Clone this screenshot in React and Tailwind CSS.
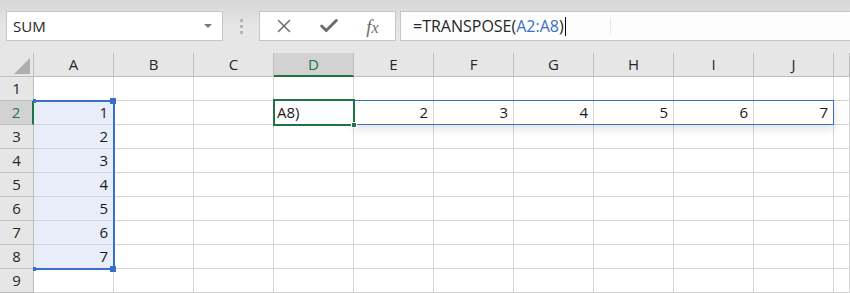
import { X, Check } from 'lucide-react';

const COLS = ['A', 'B', 'C', 'D', 'E', 'F', 'G', 'H', 'I', 'J', ''];
const ROWS = [1, 2, 3, 4, 5, 6, 7, 8, 9];

const cellValue = (row, col) => {
  if (!col) return '';
  if (col === 'A' && row >= 2 && row <= 8) return String(row - 1);
  if (row === 2) {
    const idx = 'EFGHIJ'.indexOf(col);
    if (idx >= 0) return String(idx + 2);
  }
  return '';
};

function TopBar() {
  return (
    <div className="h-[53px] flex items-start pt-[11px] bg-gradient-to-b from-[#d6d6d6] via-[#e6e6e6] to-[#e6e6e6]">
      {/* name box */}
      <div className="ml-[6px] w-[217px] h-[30px] bg-white border border-[#c6c6c6] flex items-center justify-between pl-[6px] pr-[10px]">
        <span className="text-[15px] text-[#262626]">SUM</span>
        <div className="w-0 h-0 border-l-[4px] border-r-[4px] border-t-[4px] border-l-transparent border-r-transparent border-t-[#7a7a7a]" />
      </div>
      {/* grip dots */}
      <div className="ml-[17px] mt-[8px] flex flex-col gap-[3px]">
        <div className="w-[3px] h-[3px] bg-[#b4b4b4]" />
        <div className="w-[3px] h-[3px] bg-[#b4b4b4]" />
        <div className="w-[3px] h-[3px] bg-[#b4b4b4]" />
      </div>
      {/* buttons */}
      <div className="ml-[16px] w-[137px] h-[30px] bg-white border border-[#c6c6c6] flex items-center">
        <div className="w-[45px] flex justify-center pl-[2px]">
          <X size={22} strokeWidth={1.6} color="#6b6b6b" />
        </div>
        <div className="w-[45px] flex justify-center pl-[2px]">
          <Check size={22} strokeWidth={3.2} color="#6b6b6b" />
        </div>
        <div className="w-[45px] flex justify-center">
          <span className="text-[19px] italic text-[#6b6b6b] leading-none" style={{ fontFamily: '"Liberation Serif", serif' }}>
            f<span className="text-[16px]">x</span>
          </span>
        </div>
      </div>
      {/* formula bar */}
      <div className="ml-[4px] flex-1 h-[30px] bg-[#fdfdfd] border-y border-l border-[#c6c6c6] flex items-center pl-[12px] relative">
        <span className="text-[16px] text-[#262626]">
          =TRANSPOSE(<span className="text-[#3a6fc4]">A2:A8</span>)
        </span>
        <div className="w-[1px] h-[19px] bg-black ml-[1px]" />
        <div className="absolute left-[209px] top-[6px] w-[1px] h-[16px] bg-[#e8e8e8]" />
      </div>
    </div>
  );
}

export default function App() {
  return (
    <div className="w-[850px] h-[293px] overflow-hidden bg-white" style={{ fontFamily: '"Open Sans", "Noto Sans", sans-serif' }}>
      <TopBar />
      <div className="relative">
        <div className="grid grid-cols-[34px_repeat(10,80px)_1fr] grid-rows-[24px_repeat(9,24px)]">
          {/* header row */}
          <div className="bg-[#e6e6e6] border-r border-b border-[#bdbdbd]" />
          {COLS.map((c, i) =>
            c === 'D' ? (
              <div key={i} className="bg-[#d2d2d2] border-r border-[#bdbdbd] border-b-2 border-b-[#217346] flex items-center justify-center text-[15px] text-[#217346]">
                {c}
              </div>
            ) : (
              <div key={i} className="bg-[#e6e6e6] border-r border-b border-[#bdbdbd] flex items-center justify-center text-[15px] text-[#262626]">
                {c}
              </div>
            )
          )}
          {ROWS.map((r) => [
            r === 2 ? (
              <div key={`h${r}`} className="bg-[#d2d2d2] border-b border-[#bdbdbd] border-r-2 border-r-[#217346] flex items-center justify-center text-[15px] text-[#217346]">
                {r}
              </div>
            ) : (
              <div key={`h${r}`} className="bg-[#e6e6e6] border-r border-b border-[#bdbdbd] flex items-center justify-center text-[15px] text-[#262626]">
                {r}
              </div>
            ),
            ...COLS.map((c, i) => {
              const inA = c === 'A' && r >= 2 && r <= 8;
              const v = cellValue(r, c);
              return (
                <div
                  key={`${r}-${i}`}
                  className={`border-r border-b border-[#d4d4d4] flex items-center justify-end pr-[5px] text-[15px] text-[#1a1a1a] ${inA ? 'bg-[#e7eef9]' : ''}`}
                >
                  {v}
                </div>
              );
            }),
          ])}
        </div>

        {/* select-all corner triangle */}
        <svg className="absolute left-[14px] top-[5px]" width="16" height="16" viewBox="0 0 16 16">
          <path d="M16 0 L16 16 L0 16 Z" fill="#aeaeae" />
        </svg>

        {/* A2:A8 reference highlight */}
        <div className="absolute left-[34px] top-[47px] w-[81px] h-[170px] border-t-2 border-b-2 border-r-2 border-[#3a6fc8] pointer-events-none" />
        <div className="absolute left-[110px] top-[45px] w-[6px] h-[6px] bg-[#3a6fc8]" />
        <div className="absolute left-[110px] top-[213px] w-[6px] h-[6px] bg-[#3a6fc8]" />
        <div className="absolute left-[33px] top-[46px] w-[3px] h-[4px] bg-[#3a6fc8]" />
        <div className="absolute left-[33px] top-[214px] w-[3px] h-[4px] bg-[#3a6fc8]" />

        {/* D2:J2 spill range */}
        <div className="absolute left-[353px] top-[47px] w-[481px] h-[25px] border border-[#3a6fc8] shadow-[0_4px_10px_rgba(0,0,0,0.12)]" />

        {/* active cell D2 */}
        <div className="absolute left-[273px] top-[46px] w-[82px] h-[27px] border-2 border-[#217346] bg-white flex items-center pl-[2px] text-[15px] text-[#1a1a1a]">
          A8)
        </div>
        <div className="absolute left-[351px] top-[69px] w-[6px] h-[6px] bg-[#217346] border border-white" />
      </div>
    </div>
  );
}
